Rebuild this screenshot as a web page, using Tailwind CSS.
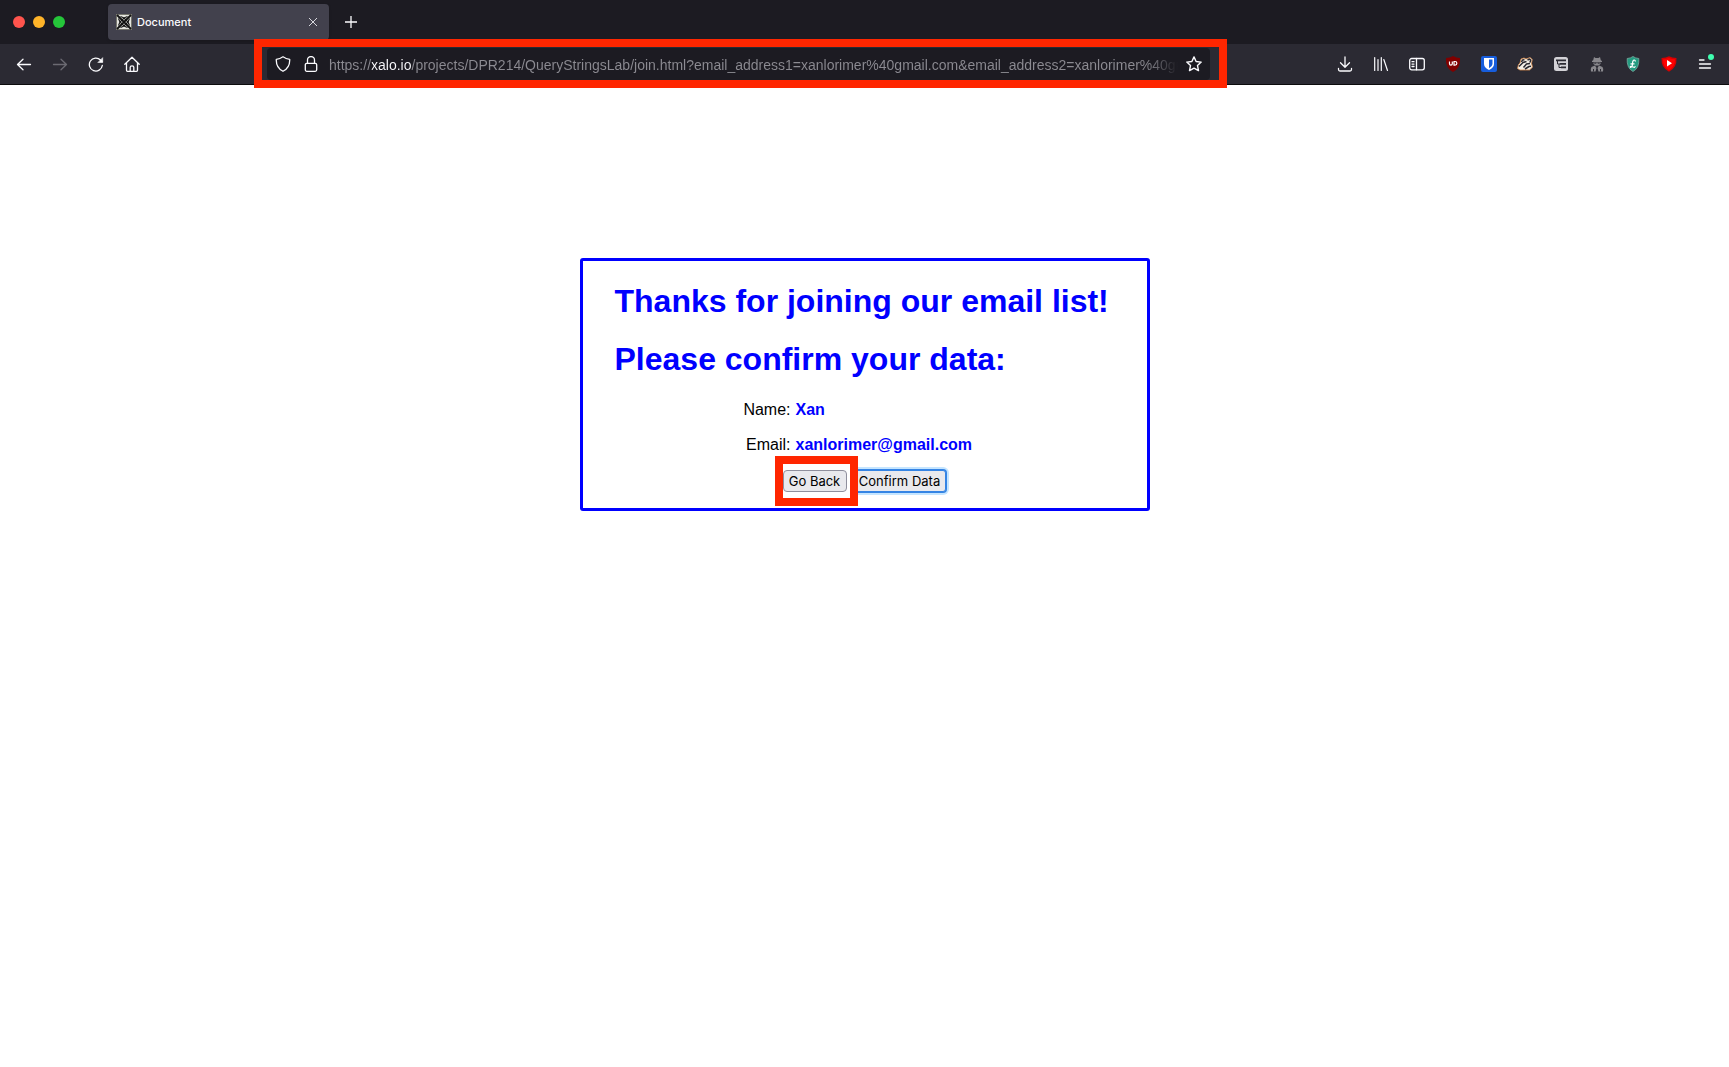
<!DOCTYPE html>
<html lang="en">
<head>
<meta charset="utf-8">
<title>Document</title>
<script src="https://cdn.jsdelivr.net/npm/@tailwindcss/browser@4"></script>
</head>
<body class="min-h-screen bg-white font-['Inter',sans-serif]">
<header class="bg-[#2b2a33] border-b border-[#0c0c0d] text-[#fbfbfe]">
  <div class="flex h-11 items-center bg-[#1c1b22] pl-[13px]">
    <div class="flex w-[95px] gap-2">
      <button aria-label="Close window" class="size-3 rounded-full bg-[#ff544d]"></button>
      <button aria-label="Minimize window" class="size-3 rounded-full bg-[#ffb429]"></button>
      <button aria-label="Zoom window" class="size-3 rounded-full bg-[#25c63a]"></button>
    </div>
    <div class="flex h-9 w-[221px] items-center rounded bg-[#42414d] pr-2 pl-2 shadow">
      <svg class="size-4" viewBox="0 0 16 16" fill="none" stroke="#111" stroke-width="1">
        <rect width="16" height="16" fill="#e4e4de" stroke="none"/>
        <rect x=".5" y=".5" width="15" height="15" stroke="#77776f"/>
        <path d="M1 1l14 14M15 1L1 15" stroke-width="1.800"/>
        <path d="M8 4L12 8 8 12 4 8zM4.500 2.500L8 4l3.500-1.500M4.500 13.500L8 12l3.500 1.500M2.500 4.500L4 8l-1.500 3.500M13.500 4.500L12 8l1.500 3.500" stroke-width="1.100"/>
      </svg>
      <span class="ml-[5px] flex-1 text-[11px] font-medium">Document</span>
      <button aria-label="Close tab" class="flex size-4 items-center justify-center"><svg class="size-[10px]" viewBox="0 0 10 10" stroke="#d8d8de" fill="none"><path d="M1 1l8 8M9 1L1 9"/></svg></button>
    </div>
    <button aria-label="New tab" class="ml-[14px] flex size-4 items-center justify-center"><svg class="size-3" viewBox="0 0 12 12" stroke="currentColor" stroke-width="1.300" fill="none"><path d="M6 0v12M0 6h12"/></svg></button>
  </div>
  <div class="flex h-10 items-center pr-4 pl-4">
    <nav aria-label="Navigation" class="flex gap-5">
      <button aria-label="Back"><svg class="size-4" viewBox="0 0 16 16" fill="none" stroke="currentColor" stroke-width="1.300" stroke-linecap="round" stroke-linejoin="round"><path d="M14.500 8.500H1.500M7 3.200L1.500 8.500 7 13.800"/></svg></button>
      <button aria-label="Forward" disabled><svg class="size-4 text-[#6b6a72]" viewBox="0 0 16 16" fill="none" stroke="currentColor" stroke-width="1.300" stroke-linecap="round" stroke-linejoin="round"><path d="M1.500 8.500h13M9 3.200l5.500 5.300L9 13.800"/></svg></button>
      <button aria-label="Reload"><svg class="size-4" viewBox="0 0 16 16" fill="none" stroke="currentColor" stroke-width="1.300" stroke-linecap="round"><path d="M14.300 9.500A6.500 6.500 0 1 1 12.500 4L14 5.500"/><path d="M14.700 2V6.500h-4.500z" fill="currentColor" stroke-width=".6"/></svg></button>
      <button aria-label="Home"><svg class="size-4" viewBox="0 0 16 16" fill="none" stroke="currentColor" stroke-width="1.300" stroke-linecap="round" stroke-linejoin="round"><path d="M.8 8.300L8 1.300l7.200 7M2.500 7V14.300q0 1 1 1h9q1 0 1-1V7M6.200 15.300v-4q0-1.500 1.800-1.500t1.800 1.500v4"/></svg></button>
    </nav>
    <div class="relative mx-[127px] flex h-8 flex-1 items-center rounded bg-[#1c1b22] px-2">
      <button aria-label="Tracking protection"><svg class="size-4" viewBox="0 0 16 16" fill="none" stroke="currentColor" stroke-width="1.300" stroke-linejoin="round"><path d="M8 .8q3 2.200 6.700 2.500.4 8.200-6.700 12Q.9 11.500 1.300 3.300 5 3 8 .8z"/></svg></button>
      <button aria-label="Site information" class="ml-3"><svg class="size-4" viewBox="0 0 16 16" fill="none" stroke="currentColor" stroke-width="1.300"><rect x="2.300" y="7.300" width="11.400" height="8" rx="1.500"/><path d="M4.500 7.300V4a3.500 3.500 0 0 1 7 0v3.300"/></svg></button>
      <input aria-label="Address" type="text" spellcheck="false" value="https://xalo.io/projects/DPR214/QueryStringsLab/join.html?email_address1=xanlorimer%40gmail.com&amp;email_address2=xanlorimer%40gmail.com" class="ml-[10px] h-8 min-w-0 flex-1 bg-[linear-gradient(90deg,#8c8b92_43px,#fbfbfe_43px,#fbfbfe_82px,#8c8b92_82px,#8c8b92_calc(100%-36px),transparent_calc(100%-4px))] bg-clip-text pt-[2px] font-['Liberation_Sans',sans-serif] text-[14px] text-transparent outline-none">
      <button aria-label="Bookmark" class="ml-1"><svg class="size-4" viewBox="0 0 16 16" fill="none" stroke="currentColor" stroke-width="1.400" stroke-linejoin="round"><path d="M8 .9l2.100 4.600 5.100.6-3.700 3.500 1 5L8 12.100l-4.500 2.500 1-5L.8 6.100l5.100-.6z"/></svg></button>
      <div class="pointer-events-none absolute -top-[9px] -right-[17px] -bottom-2 -left-[13px] border-8 border-[#ff2600]"></div>
    </div>
    <div class="flex gap-5">
      <button aria-label="Downloads"><svg class="size-4" viewBox="0 0 16 16" fill="none" stroke="currentColor" stroke-width="1.300" stroke-linecap="round" stroke-linejoin="round"><path d="M8 1v10M3.500 6.800L8 11.200l4.500-4.400M1.500 12.500v1q0 1.500 1.500 1.500h10q1.500 0 1.500-1.500v-1"/></svg></button>
      <button aria-label="Library"><svg class="size-4" viewBox="0 0 16 16" fill="none" stroke="currentColor" stroke-width="1.200" stroke-linecap="round"><path d="M1.700 1.500v13M5 3.500v11M8.300 1.500v13M10.800 3.500l3.700 11"/></svg></button>
      <button aria-label="Sidebars"><svg class="size-4" viewBox="0 0 16 16" fill="none" stroke="currentColor" stroke-width="1.300" stroke-linecap="round"><rect x=".7" y="2.500" width="14.600" height="11.300" rx="2"/><path d="M7.500 2.500v11.300M3 5.700h2M3 8.100h2M3 10.500h2"/></svg></button>
      <button aria-label="uBlock Origin"><svg class="size-4" viewBox="0 0 16 16" fill="none"><path d="M8 0q3 2 7 2 .8 10-7 14Q.2 12 1 2q4 0 7-2z" fill="#800000"/><path d="M4.500 5.500v2.300a1.400 1.400 0 0 0 2.800 0V5.500M9 5.500v3.700h1a1.800 1.800 0 0 0 0-3.700z" stroke="#fff" stroke-width="1.200"/></svg></button>
      <button aria-label="Bitwarden"><svg class="size-4" viewBox="0 0 16 16"><rect width="16" height="16" rx="2" fill="#175ddc"/><path d="M3 2h10v6q0 3.500-5 6-5-2.500-5-6z" fill="#fff"/><path d="M8 3.500h3.500V8q0 2.300-3.500 4.200z" fill="#175ddc"/></svg></button>
      <button aria-label="Privacy Badger"><svg class="size-4" viewBox="0 0 16 16" stroke-linejoin="round"><path d="M.5 12.500l1-4L3 7l1-4 3-1 2 1L13 1.500l2.300 2-.8 3.700 1 4-3 2.800H3z" fill="#f4efe6" stroke="#d98b4b" stroke-width=".8"/><path d="M4.500 6l1-2 2-.3M10.500 4l2-1 1.200 1-.7 2.500M2 10.500l4-4 3.500-1M6.500 11.500l3-3.500 3.500-.5M8 13l4-2.500 2-.3" fill="none" stroke="#292830" stroke-width="1.500"/></svg></button>
      <button aria-label="Form tools"><svg class="size-4" viewBox="0 0 16 16"><rect x="1" y="1" width="14" height="14" rx="2.500" fill="#d3d2d7"/><path d="M3 3.500h10v1.800H3zM6.500 7H13v1.800H6.500zM8 10.500h5v1.800H8z" fill="#2b2a33"/><path d="M4.500 5v3h2M6 8v3.500h2" fill="none" stroke="#2b2a33"/></svg></button>
      <button aria-label="Anonymous browsing"><svg class="size-4" viewBox="0 0 16 16" fill="#89888d"><path d="M5 1l1.500 1h3L11 1l.8 3.200 1.200.8v1H3V5l1.200-.8zM4.500 6.500h7V8L9.500 9.500h-3L4.500 8zM2.500 11L6 9.500 7.500 12l-1 3.500H2q-1-2 .5-4.500zM13.500 11L10 9.500 8.500 12l1 3.500H14q1-2-.5-4.500z"/><path d="M5.300 7.200h2M8.700 7.200h2M4.500 13v2.500M11.500 13v2.500" stroke="#2b2a33"/></svg></button>
      <button aria-label="LocalCDN"><svg class="size-4" viewBox="0 0 16 16" fill="none"><path d="M8 .5q2.500 1.800 5.800 2Q14.500 12 8 15.500 1.500 12 2.200 2.500q3.300-.2 5.800-2z" fill="#239b80" stroke="#76a99f" stroke-width=".8"/><path d="M10.500 5.500Q10 3.500 8.500 4.200 7.500 5 7.500 8q0 3-2 3.300-.8-1 .8-.8l3 .9 1.200-1M5.500 7.800h4" stroke="#fff" stroke-width="1.200"/></svg></button>
      <button aria-label="YouTube Enhancer"><svg class="size-4" viewBox="0 0 16 16"><path d="M8 .3q3 1.500 7.500 1.700Q16 12 8 15.700 0 12 .5 2 5 1.800 8 .3z" fill="#d50000"/><path d="M8 2q3 1.200 6 1.300Q14 11 8 14.300 2 11 2 3.300 5 3.200 8 2z" fill="#f00"/><path d="M6 4L11 7.300 6 10.500z" fill="#fff"/></svg></button>
      <button aria-label="Menu" class="relative"><svg class="size-4" viewBox="0 0 16 16" fill="none" stroke="currentColor" stroke-width="1.300" stroke-linecap="round"><path d="M2.500 4h4.500M2.500 8h11M2.500 12h11"/></svg><span class="absolute -top-[2px] -right-px size-[6px] rounded-full bg-[#3fffb0]"></span></button>
    </div>
  </div>
</header>
<main class="flex justify-center pt-[173px] font-['Liberation_Sans',sans-serif] text-base leading-[18px] text-black">
  <form class="w-[570px] rounded-[3px] border-[3px] border-[#0000ff] px-8 pt-[22px] pb-4">
    <h1 class="text-[32px] leading-[37px] font-bold text-[#0000ff]">Thanks for joining our email list!</h1>
    <h1 class="mt-[21px] text-[32px] leading-[37px] font-bold text-[#0000ff]">Please confirm your data:</h1>
    <dl class="mt-[23px] grid grid-cols-[176px_1fr] gap-x-[5px] gap-y-[17px]">
      <dt class="text-right">Name:</dt><dd class="font-bold text-[#0000ff]">Xan</dd>
      <dt class="text-right">Email:</dt><dd class="font-bold text-[#0000ff]">xanlorimer@gmail.com</dd>
    </dl>
    <div class="mt-4 flex gap-[7px] pl-[168px] font-['Inter',sans-serif] text-[13px] leading-5">
      <div class="relative z-10">
        <button type="button" class="h-[22px] w-16 rounded border border-[#8f8f9d] bg-[#e9e9ed]">Go Back</button>
        <div class="pointer-events-none absolute -top-[14px] -right-[11px] -bottom-[14px] -left-2 border-8 border-[#ff2600]"></div>
      </div>
      <button type="button" class="h-[22px] w-[92px] rounded-[3px] border border-[#3584e4] bg-[#e9e9ed] whitespace-nowrap shadow-[0_0_0_1px_#3584e4,0_0_0_3px_#c5e5ff]">Confirm Data</button>
    </div>
  </form>
</main>
</body>
</html>
